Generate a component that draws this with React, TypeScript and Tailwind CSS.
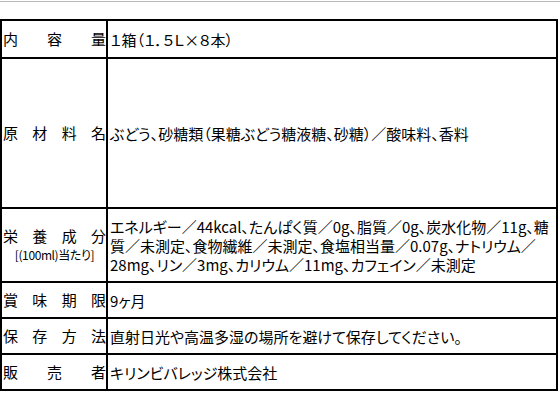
const rows: { label: string[]; sub?: string; h: string; body: string[] }[] = [
  { label: ["内", "容", "量"], h: "h-[36px]", body: ["１箱（１．５Ｌ×８本）"] },
  {
    label: ["原", "材", "料", "名"],
    h: "h-[150px]",
    body: ["ぶどう、砂糖類（果糖ぶどう糖液糖、砂糖）／酸味料、香料"],
  },
  {
    label: ["栄", "養", "成", "分"],
    sub: "[(100ml)当たり]",
    h: "h-[74px]",
    body: [
      "エネルギー／44kcal、たんぱく質／0g、脂質／0g、炭水化物／11g、糖",
      "質／未測定、食物繊維／未測定、食塩相当量／0.07g、ナトリウム／",
      "28mg、リン／3mg、カリウム／11mg、カフェイン／未測定",
    ],
  },
  { label: ["賞", "味", "期", "限"], h: "h-[36px]", body: ["9ヶ月"] },
  {
    label: ["保", "存", "方", "法"],
    h: "h-[36px]",
    body: ["直射日光や高温多湿の場所を避けて保存してください。"],
  },
  { label: ["販", "売", "者"], h: "h-[36px]", body: ["キリンビバレッジ株式会社"] },
];

export default function App() {
  return (
    <div className="w-[560px] h-[420px] bg-white text-black font-['Noto_Sans_CJK_JP',sans-serif] [font-feature-settings:'palt']">
      <div className="h-px mt-px bg-[#b9b9b9]" />
      <div className="mt-[17px] w-[558px] border-2 border-black">
        {rows.map((r, i) => (
          <div
            key={i}
            className={`grid grid-cols-[106px_1fr] ${r.h} ${i > 0 ? "border-t-2 border-black" : ""}`}
          >
            <div className="border-r-2 border-black flex flex-col justify-center pl-px">
              <div className="flex justify-between text-[15px] leading-[18px]">
                {r.label.map((c) => (
                  <span key={c}>{c}</span>
                ))}
              </div>
              {r.sub && (
                <div className="text-center text-[12px] leading-[16px] mt-[2px] tracking-[-0.4px]">{r.sub}</div>
              )}
            </div>
            <div className="flex flex-col justify-center pl-[2px] text-[15px] leading-[19px] whitespace-nowrap">
              {r.body.map((l, j) => (
                <div key={j}>{l}</div>
              ))}
            </div>
          </div>
        ))}
      </div>
    </div>
  );
}
